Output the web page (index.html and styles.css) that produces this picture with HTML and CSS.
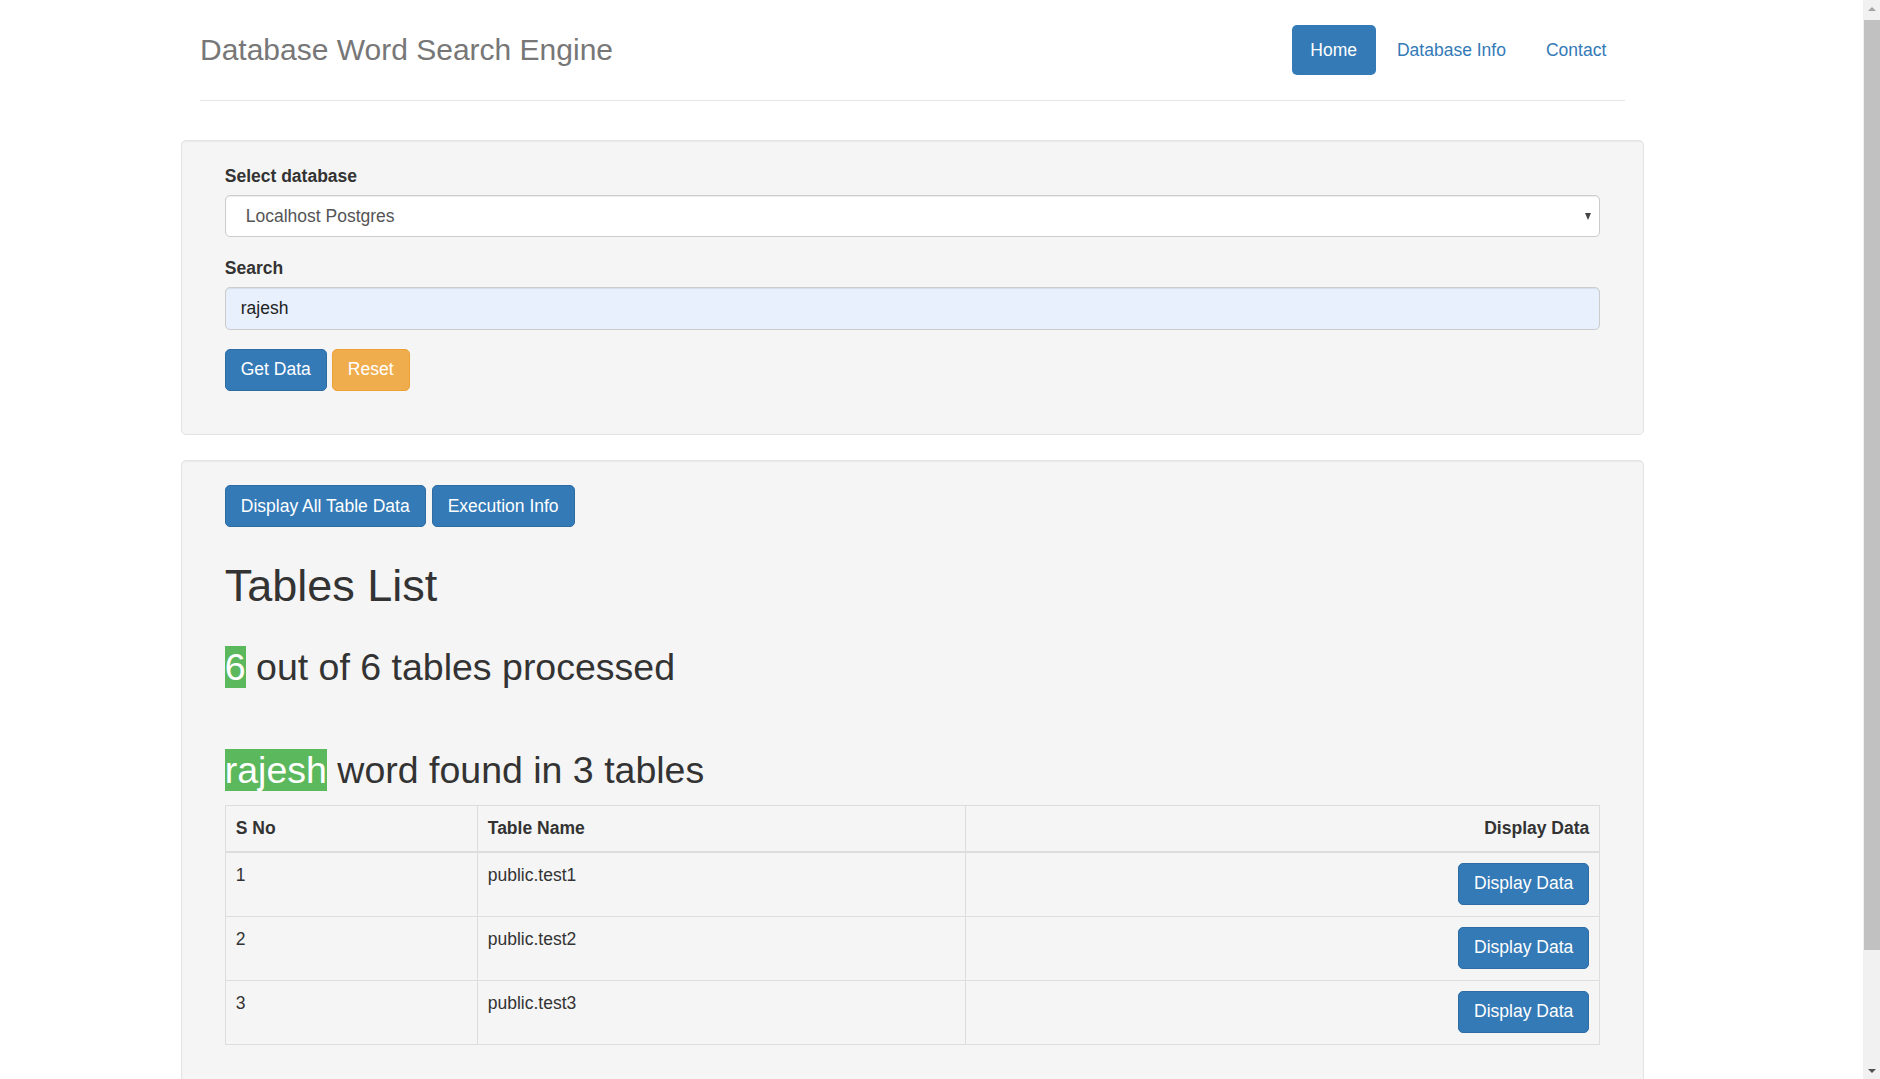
FILE: index.html
```html
<!DOCTYPE html>
<html lang="en">
<head>
<meta charset="utf-8">
<title>Database Word Search Engine</title>
<link rel="stylesheet" href="styles.css">
</head>
<body>
<div class="screen">
  <div class="page">
    <div class="container">
      <header class="header">
        <h3 class="brand">Database Word Search Engine</h3>
        <nav class="pills">
          <a class="pill active" href="#">Home</a>
          <a class="pill" href="#">Database Info</a>
          <a class="pill" href="#">Contact</a>
        </nav>
      </header>

      <div class="well well-form">
        <form class="search-form">
          <div class="form-group">
            <label class="field-label">Select database</label>
            <div class="select-wrap">
              <select class="form-control select-control">
                <option>Localhost Postgres</option>
              </select>
              <span class="select-caret"></span>
            </div>
          </div>
          <div class="form-group">
            <label class="field-label">Search</label>
            <input class="form-control input-control" type="text" value="rajesh">
          </div>
          <div class="btn-row">
            <button type="button" class="btn btn-primary">Get Data</button>
            <button type="button" class="btn btn-warning">Reset</button>
          </div>
        </form>
      </div>

      <div class="well">
        <div class="results">
          <div class="btn-row btn-row-tight">
            <button type="button" class="btn btn-primary">Display All Table Data</button>
            <button type="button" class="btn btn-primary">Execution Info</button>
          </div>
          <h1 class="tables-title">Tables List</h1>
          <h2 class="processed"><span class="hit">6</span> out of 6 tables processed</h2>
          <h2 class="found"><span class="hit">rajesh</span> word found in 3 tables</h2>
          <table class="result-table">
            <colgroup>
              <col class="col-sno">
              <col class="col-name">
              <col>
            </colgroup>
            <thead>
              <tr>
                <th>S No</th>
                <th>Table Name</th>
                <th class="right">Display Data</th>
              </tr>
            </thead>
            <tbody>
              <tr>
                <td>1</td>
                <td>public.test1</td>
                <td class="right"><button type="button" class="btn btn-primary">Display Data</button></td>
              </tr>
              <tr>
                <td>2</td>
                <td>public.test2</td>
                <td class="right"><button type="button" class="btn btn-primary">Display Data</button></td>
              </tr>
              <tr>
                <td>3</td>
                <td>public.test3</td>
                <td class="right"><button type="button" class="btn btn-primary">Display Data</button></td>
              </tr>
            </tbody>
          </table>
        </div>
      </div>
    </div>
  </div>
  <div class="scrollbar">
    <div class="sb-arrow"><span class="tri-up"></span></div>
    <div class="sb-thumb"></div>
    <div class="sb-space"></div>
    <div class="sb-arrow"><span class="tri-down"></span></div>
  </div>
</div>
</body>
</html>
```

FILE: styles.css
```css
html, body {
  margin: 0;
  padding: 0;
  height: 100%;
  overflow: hidden;
}

body {
  font-family: "Liberation Sans", Arial, Helvetica, sans-serif;
  font-size: 17.5px;
  line-height: 25px;
  color: #333;
  background: #fff;
}

* {
  box-sizing: border-box;
}

.screen {
  display: flex;
  height: 1079px;
}

.page {
  flex: 1;
  overflow: hidden;
  padding-top: 25px;
}

.container {
  width: 1463px;
  margin-left: 181px;
}

/* header */
.header {
  display: flex;
  justify-content: space-between;
  align-items: flex-start;
  margin: 0 19px 39px;
  padding-bottom: 25px;
  border-bottom: 1px solid #e5e5e5;
}

.brand {
  margin: 0;
  font-size: 30px;
  line-height: 50px;
  font-weight: normal;
  color: #777;
}

.pills {
  display: flex;
  gap: 2.5px;
}

.pill {
  display: block;
  padding: 12.5px 18.75px;
  line-height: 25px;
  color: #337ab7;
  text-decoration: none;
  border-radius: 5px;
}

.pill.active {
  background: #337ab7;
  color: #fff;
}

/* wells */
.well {
  background: #f5f5f5;
  border: 1px solid #e3e3e3;
  border-radius: 5px;
  box-shadow: inset 0 1px 1px rgba(0, 0, 0, 0.05);
  padding: 23.75px 42.75px;
  margin-bottom: 25px;
}

.well-form {
  padding-top: 22.5px;
  padding-bottom: 25px;
}

.form-group {
  margin-bottom: 18.75px;
}

.field-label {
  display: block;
  font-weight: bold;
  margin-bottom: 6.25px;
}

.form-control {
  display: block;
  width: 100%;
  height: 42.5px;
  padding: 7.5px 15px;
  font-family: inherit;
  font-size: 17.5px;
  line-height: 25px;
  color: #555;
  background: #fff;
  border: 1px solid #ccc;
  border-radius: 5px;
  box-shadow: inset 0 1px 1px rgba(0, 0, 0, 0.075);
  outline: none;
}

.select-wrap {
  position: relative;
}

.select-control {
  -webkit-appearance: none;
  appearance: none;
  padding-left: 20px;
}

.select-caret {
  position: absolute;
  right: 9px;
  top: 18px;
  width: 0;
  height: 0;
  border-left: 3.5px solid transparent;
  border-right: 3.5px solid transparent;
  border-top: 7px solid #444;
}

.input-control {
  background: #e8f0fe;
  color: #222;
}

.btn-row {
  display: flex;
  gap: 5px;
  margin-bottom: 18.75px;
}

.btn-row-tight {
  gap: 6px;
  margin-bottom: 0;
}

.btn {
  display: inline-block;
  padding: 7.5px 15px;
  font-family: inherit;
  font-size: 17.5px;
  line-height: 25px;
  border: 1px solid transparent;
  border-radius: 5px;
  cursor: pointer;
  white-space: nowrap;
}

.btn-primary {
  background: #337ab7;
  border-color: #2e6da4;
  color: #fff;
}

.btn-warning {
  background: #f0ad4e;
  border-color: #eea236;
  color: #fff;
}

/* results */
.tables-title {
  margin: 34px 0 0;
  font-size: 45px;
  line-height: 49.5px;
  font-weight: 500;
}

.processed,
.found {
  font-size: 37.5px;
  line-height: 41.25px;
  font-weight: 500;
  margin: 0;
}

.processed {
  margin-top: 36px;
}

.found {
  margin-top: 62px;
  margin-bottom: 13.5px;
}

.hit {
  background: #5cb85c;
  color: #fff;
}

.result-table {
  width: 100%;
  border-collapse: collapse;
  table-layout: fixed;
  border: 1px solid #ddd;
  margin-bottom: 25px;
}

.col-sno {
  width: 252px;
}

.col-name {
  width: 488px;
}

.result-table th,
.result-table td {
  padding: 10px;
  border: 1px solid #ddd;
  vertical-align: top;
  text-align: left;
  line-height: 25px;
}

.result-table td {
  padding-bottom: 11px;
}

.result-table th {
  font-weight: bold;
  border-bottom: 2px solid #ddd;
}

.result-table .right {
  text-align: right;
}

.result-table td .btn {
  display: inline-block;
}

/* fake scrollbar */
.scrollbar {
  width: 17px;
  flex: 0 0 17px;
  background: #f1f1f1;
  display: flex;
  flex-direction: column;
}

.sb-arrow {
  height: 17px;
  display: flex;
  align-items: center;
  justify-content: center;
}

.tri-up {
  width: 0;
  height: 0;
  border-left: 4px solid transparent;
  border-right: 4px solid transparent;
  border-bottom: 4px solid #a3a3a3;
}

.tri-down {
  width: 0;
  height: 0;
  border-left: 4px solid transparent;
  border-right: 4px solid transparent;
  border-top: 4px solid #505050;
}

.sb-thumb {
  height: 930px;
  margin: 3px 0 0 1px;
  background: #c1c1c1;
}

.sb-space {
  flex: 1;
}
```
